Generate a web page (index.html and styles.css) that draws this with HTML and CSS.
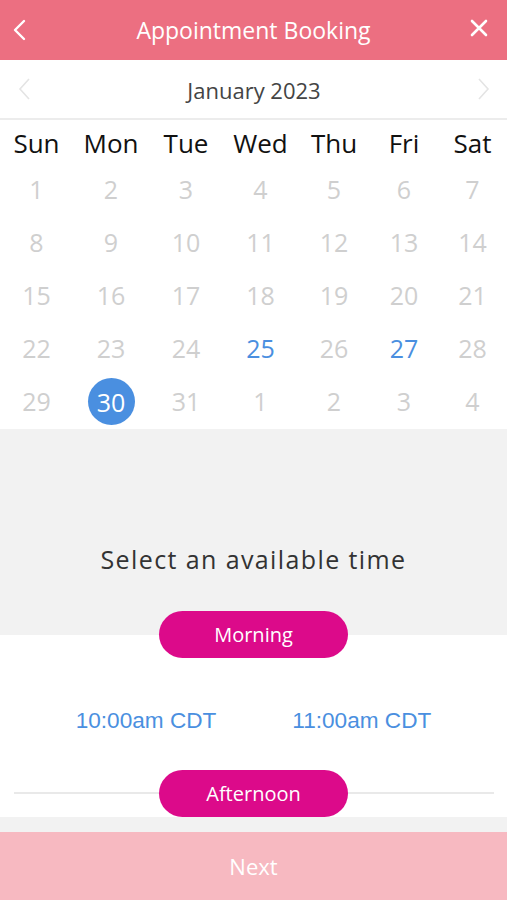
FILE: index.html
```html
<!Doctype html>
<html>
    <head>
        <title>Appointment Booking</title>
        <link rel="stylesheet" href="styles.css">
    </head>
    <body>
        <!-- Top bar -->
        <div class='top-bar'>
            <svg class='top-icon' width='16' height='24' viewBox='0 0 16 24'>
                <path d='M12 3 L3 12 L12 21' fill='none' stroke='#fff' stroke-width='2.4' stroke-linecap='round' stroke-linejoin='round'/>
            </svg>
            <div class='top-title'>Appointment Booking</div>
            <svg class='top-icon' width='20' height='20' viewBox='0 0 20 20'>
                <path d='M3 3 L17 17 M17 3 L3 17' fill='none' stroke='#fff' stroke-width='2.6' stroke-linecap='round'/>
            </svg>
        </div>

        <!-- Month switcher -->
        <div class='month-bar'>
            <svg width='14' height='24' viewBox='0 0 14 24'>
                <path d='M11 2 L2 12 L11 22' fill='none' stroke='#e4e4e4' stroke-width='1.6'/>
            </svg>
            <div class='month-name'>January 2023</div>
            <svg width='14' height='24' viewBox='0 0 14 24'>
                <path d='M3 2 L12 12 L3 22' fill='none' stroke='#e4e4e4' stroke-width='1.6'/>
            </svg>
        </div>

        <!-- Calendar -->
        <div class='calendar'>
            <div class='weekday'>Sun</div>
            <div class='weekday'>Mon</div>
            <div class='weekday'>Tue</div>
            <div class='weekday'>Wed</div>
            <div class='weekday'>Thu</div>
            <div class='weekday'>Fri</div>
            <div class='weekday'>Sat</div>

            <div class='day'>1</div>
            <div class='day'>2</div>
            <div class='day'>3</div>
            <div class='day'>4</div>
            <div class='day'>5</div>
            <div class='day'>6</div>
            <div class='day'>7</div>

            <div class='day'>8</div>
            <div class='day'>9</div>
            <div class='day'>10</div>
            <div class='day'>11</div>
            <div class='day'>12</div>
            <div class='day'>13</div>
            <div class='day'>14</div>

            <div class='day'>15</div>
            <div class='day'>16</div>
            <div class='day'>17</div>
            <div class='day'>18</div>
            <div class='day'>19</div>
            <div class='day'>20</div>
            <div class='day'>21</div>

            <div class='day'>22</div>
            <div class='day'>23</div>
            <div class='day'>24</div>
            <div class='day open'>25</div>
            <div class='day'>26</div>
            <div class='day open'>27</div>
            <div class='day'>28</div>

            <div class='day'>29</div>
            <div class='day'><span class='selected'>30</span></div>
            <div class='day'>31</div>
            <div class='day'>1</div>
            <div class='day'>2</div>
            <div class='day'>3</div>
            <div class='day'>4</div>
        </div>

        <!-- Times -->
        <div class='time-head'>
            <div class='time-prompt'>Select an available time</div>
        </div>
        <div class='period-row split'>
            <div class='period'>Morning</div>
        </div>
        <div class='slots'>
            <div class='slot'>10:00am CDT</div>
            <div class='slot'>11:00am CDT</div>
        </div>
        <div class='period-row lined'>
            <div class='period'>Afternoon</div>
        </div>
        <div class='spacer'></div>

        <div class='next-bar'>Next</div>
    </body>
</html>
```

FILE: styles.css
```css
/* Page */
body {
    margin: 0;
    width: 507px;
    height: 900px;
    overflow: hidden;
    font-family: "Open Sans", "Noto Sans", sans-serif;
    background-color: #fff;
}

/* Top bar */
.top-bar {
    height: 60px;
    background-color: #ec6f81;
    display: flex;
    align-items: center;
    justify-content: space-between;
    padding: 0 18px 0 12px;
    box-sizing: border-box;
}

.top-title {
    color: #fff;
    font-size: 23px;
    margin-left: 10px;
}

.top-icon:last-child {
    margin-top: -4px;
}

/* Month switcher */
.month-bar {
    height: 58px;
    border-bottom: 2px solid #ececec;
    display: flex;
    align-items: center;
    justify-content: space-between;
    padding: 0 17px 0 18px;
}

.month-name {
    font-size: 22px;
    color: #444;
    padding-top: 1px;
}

/* Calendar grid */
.calendar {
    display: grid;
    grid-template-columns: 73px 76px 74px 75px 72px 68px 69px;
    grid-template-rows: 44px repeat(5, 53px);
}

.weekday {
    font-size: 26px;
    color: #111;
    text-align: center;
    padding-top: 4px;
    line-height: 38px;
}

.day {
    font-size: 25px;
    color: #cfcfcf;
    display: flex;
    align-items: center;
    justify-content: center;
    padding-bottom: 4px;
}

.open {
    color: #4a8fe0;
}

.selected {
    width: 47px;
    height: 47px;
    border-radius: 50%;
    background-color: #4a8fe0;
    color: #fff;
    display: flex;
    align-items: center;
    justify-content: center;
    margin-top: 2px;
}

/* Time section */
.time-head {
    background-color: #f2f2f2;
    height: 182px;
    display: flex;
    align-items: flex-end;
    justify-content: center;
}

.time-prompt {
    font-size: 25px;
    color: #333;
    letter-spacing: 1.4px;
    margin-bottom: 35px;
}

.period-row {
    display: flex;
    justify-content: center;
}

.split {
    background: linear-gradient(#f2f2f2 24px, #fff 24px);
}

.lined {
    background: linear-gradient(transparent 22px, #e9e9e9 22px, #e9e9e9 24px, transparent 24px) no-repeat 14px 0 / 480px 100%;
}

.period {
    width: 189px;
    height: 47px;
    border-radius: 24px;
    background-color: #dc0a8a;
    color: #fff;
    font-size: 20px;
    display: flex;
    align-items: center;
    justify-content: center;
}

.slots {
    height: 112px;
    box-sizing: border-box;
    padding-top: 14px;
    display: flex;
    justify-content: center;
    align-items: center;
    gap: 76px;
    font-family: "Liberation Sans", Arial, sans-serif;
    font-size: 22.6px;
    color: #4a8fe0;
}

.spacer {
    height: 15px;
    background-color: #f2f2f2;
}

/* Bottom button */
.next-bar {
    height: 68px;
    background-color: #f7b9c1;
    color: #fff;
    font-size: 22px;
    display: flex;
    align-items: center;
    justify-content: center;
}
```
